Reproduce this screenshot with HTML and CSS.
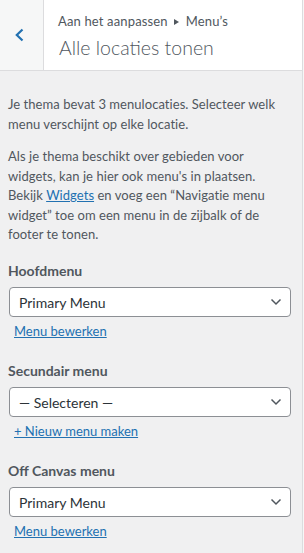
FILE: index.html
```html
<!DOCTYPE html>
<html lang="nl">
<head>
<meta charset="utf-8">
<title>Menu's</title>
<link rel="stylesheet" href="styles.css">
</head>
<body>
<div class="panel">
  <header class="head">
    <div class="back">
      <svg class="back-icon" width="12" height="14" viewBox="0 0 12 14"><polyline points="8.5,1.5 2.8,7 8.5,12.5" fill="none" stroke="#2271b1" stroke-width="2.2"/></svg>
    </div>
    <div class="titles">
      <div class="crumb">Aan het aanpassen <svg class="tri" width="5" height="6" viewBox="0 0 5 6"><polygon points="0,0 5,3 0,6" fill="#50575e"/></svg> Menu’s</div>
      <h2 class="title">Alle locaties tonen</h2>
    </div>
  </header>
  <main class="content">
    <p class="desc">Je thema bevat 3 menulocaties. Selecteer welk<br>menu verschijnt op elke locatie.</p>
    <p class="desc">Als je thema beschikt over gebieden voor<br>widgets, kan je hier ook menu's in plaatsen.<br>Bekijk <a href="#" class="link">Widgets</a> en voeg een “Navigatie menu<br>widget” toe om een menu in de zijbalk of de<br>footer te tonen.</p>

    <div class="control">
      <div class="label">Hoofdmenu</div>
      <div class="select"><span>Primary Menu</span><svg class="chev" width="12" height="8" viewBox="0 0 12 8"><polyline points="1.5,1.5 6,6 10.5,1.5" fill="none" stroke="#50575e" stroke-width="1.5"/></svg></div>
      <a href="#" class="link sub">Menu bewerken</a>
    </div>

    <div class="control">
      <div class="label">Secundair menu</div>
      <div class="select"><span>— Selecteren —</span><svg class="chev" width="12" height="8" viewBox="0 0 12 8"><polyline points="1.5,1.5 6,6 10.5,1.5" fill="none" stroke="#50575e" stroke-width="1.5"/></svg></div>
      <a href="#" class="link sub">+ Nieuw menu maken</a>
    </div>

    <div class="control">
      <div class="label">Off Canvas menu</div>
      <div class="select"><span>Primary Menu</span><svg class="chev" width="12" height="8" viewBox="0 0 12 8"><polyline points="1.5,1.5 6,6 10.5,1.5" fill="none" stroke="#50575e" stroke-width="1.5"/></svg></div>
      <a href="#" class="link sub">Menu bewerken</a>
    </div>
  </main>
</div>
</body>
</html>
```
FILE: styles.css
```css
* { box-sizing: border-box; }
html, body { margin: 0; padding: 0; }
body {
  font-family: Lato, "Open Sans", sans-serif;
  background: #f6f7f7;
  color: #50575e;
  width: 304px;
  height: 553px;
  overflow: hidden;
}
.panel {
  width: 303px;
  height: 553px;
  background: #f0f0f1;
  border-right: 1px solid #dcdcde;
}
.head {
  display: flex;
  height: 71px;
  background: #fff;
  border-bottom: 1px solid #dcdcde;
}
.back {
  width: 44px;
  flex: none;
  background: #f6f7f7;
  border-right: 1px solid #dcdcde;
  display: flex;
  align-items: center;
  padding-left: 14px;
}
.back-icon { display: block; }
.titles {
  padding: 9px 14px 0 14px;
}
.crumb {
  font-size: 13px;
  line-height: 24px;
  letter-spacing: 0.15px;
  color: #50575e;
}
.tri { margin: 0 3px; vertical-align: 1px; }
.title {
  margin: 1px 0 0 1px;
  font-size: 19.5px;
  line-height: 28px;
  font-weight: 300;
  color: #50575e;
}
.content {
  padding: 24px 0 0 8px;
}
.desc {
  margin: 0 0 13px 0;
  font-size: 13px;
  line-height: 19.5px;
  width: 286px;
  letter-spacing: 0.05px;
  color: #50575e;
}
.link { color: #2271b1; text-decoration: underline; }
.control {
  padding-top: 1px;
  margin-bottom: 16px;
}
.desc + .control { margin-top: 1px; }
.label {
  font-size: 14px;
  font-weight: 700;
  line-height: 24.5px;
  color: #50575e;
}
.select {
  margin: 4px 0 0 1px;
  width: 282px;
  height: 30px;
  background: #fff;
  border: 1px solid #8c8f94;
  border-radius: 4px;
  display: flex;
  align-items: center;
  justify-content: space-between;
  padding: 0 8px 0 9px;
  font-size: 14px;
  color: #2c3338;
}
.chev { display: block; }
.sub {
  display: inline-block;
  margin: 5px 0 0 6px;
  font-size: 13px;
  line-height: 19.5px;
}
```
